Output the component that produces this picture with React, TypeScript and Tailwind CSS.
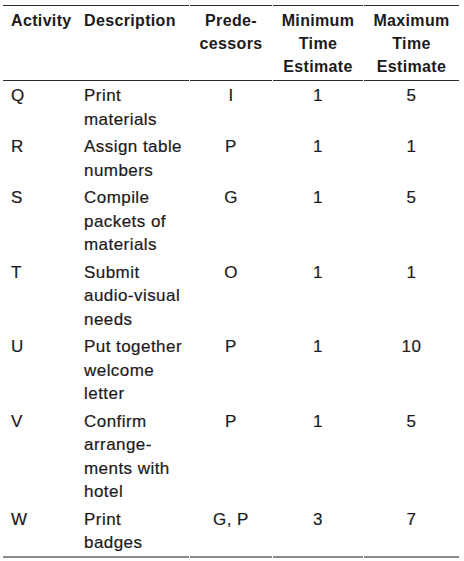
const rows = [
  { id: 'Q', desc: ['Print', 'materials'], pred: 'I', min: '1', max: '5' },
  { id: 'R', desc: ['Assign table', 'numbers'], pred: 'P', min: '1', max: '1' },
  { id: 'S', desc: ['Compile', 'packets of', 'materials'], pred: 'G', min: '1', max: '5' },
  { id: 'T', desc: ['Submit', 'audio-visual', 'needs'], pred: 'O', min: '1', max: '1' },
  { id: 'U', desc: ['Put together', 'welcome', 'letter'], pred: 'P', min: '1', max: '10' },
  { id: 'V', desc: ['Confirm', 'arrange-', 'ments with', 'hotel'], pred: 'P', min: '1', max: '5' },
  { id: 'W', desc: ['Print', 'badges'], pred: 'G, P', min: '3', max: '7' },
]

const lines = (items: string[]) =>
  items.map((t, i) => (
    <span key={i} className="block whitespace-nowrap">
      {t}
    </span>
  ))

export default function App() {
  const cols = 'grid grid-cols-[72px_113px_82px_90px_95px] gap-x-px'
  const head = 'border-t border-b border-[#2a2a2a] pt-[3px] pb-[2px] font-bold text-[16px] leading-[23px] tracking-[0.35px]'

  return (
    <div
      className="w-[464px] h-[561px] bg-white pl-[3px] pt-[5px] text-[#1c1a1b]"
      style={{ fontFamily: '"Liberation Sans", Arial, sans-serif' }}
    >
      <div className={cols}>
        {/* header */}
        <div className={`${head} pl-2 -mr-px`}>Activity</div>
        <div className={`${head} pl-2`}>Description</div>
        <div className={`${head} text-center`}>{lines(['Prede-', 'cessors'])}</div>
        <div className={`${head} text-center`}>{lines(['Minimum', 'Time', 'Estimate'])}</div>
        <div className={`${head} text-center`}>{lines(['Maximum', 'Time', 'Estimate'])}</div>

        {/* body */}
        {rows.map((r, idx) => {
          const last = idx === rows.length - 1
          const cell = `text-[17px] leading-[23.5px] tracking-[0.45px] [-webkit-text-stroke:0.2px_#1c1a1b] ${
            idx === 0 ? 'pt-[3px]' : 'pt-[2px]'
          } ${last ? 'pb-[1px] border-b-2 border-[#8a8a8a]' : 'pb-[2px]'}`
          return (
            <div key={r.id} className="contents">
              <div className={`${cell} pl-2 -mr-px`}>{r.id}</div>
              <div className={`${cell} pl-2`}>{lines(r.desc)}</div>
              <div className={`${cell} text-center`}>{r.pred}</div>
              <div className={`${cell} text-center`}>{r.min}</div>
              <div className={`${cell} text-center`}>{r.max}</div>
            </div>
          )
        })}
      </div>
    </div>
  )
}
